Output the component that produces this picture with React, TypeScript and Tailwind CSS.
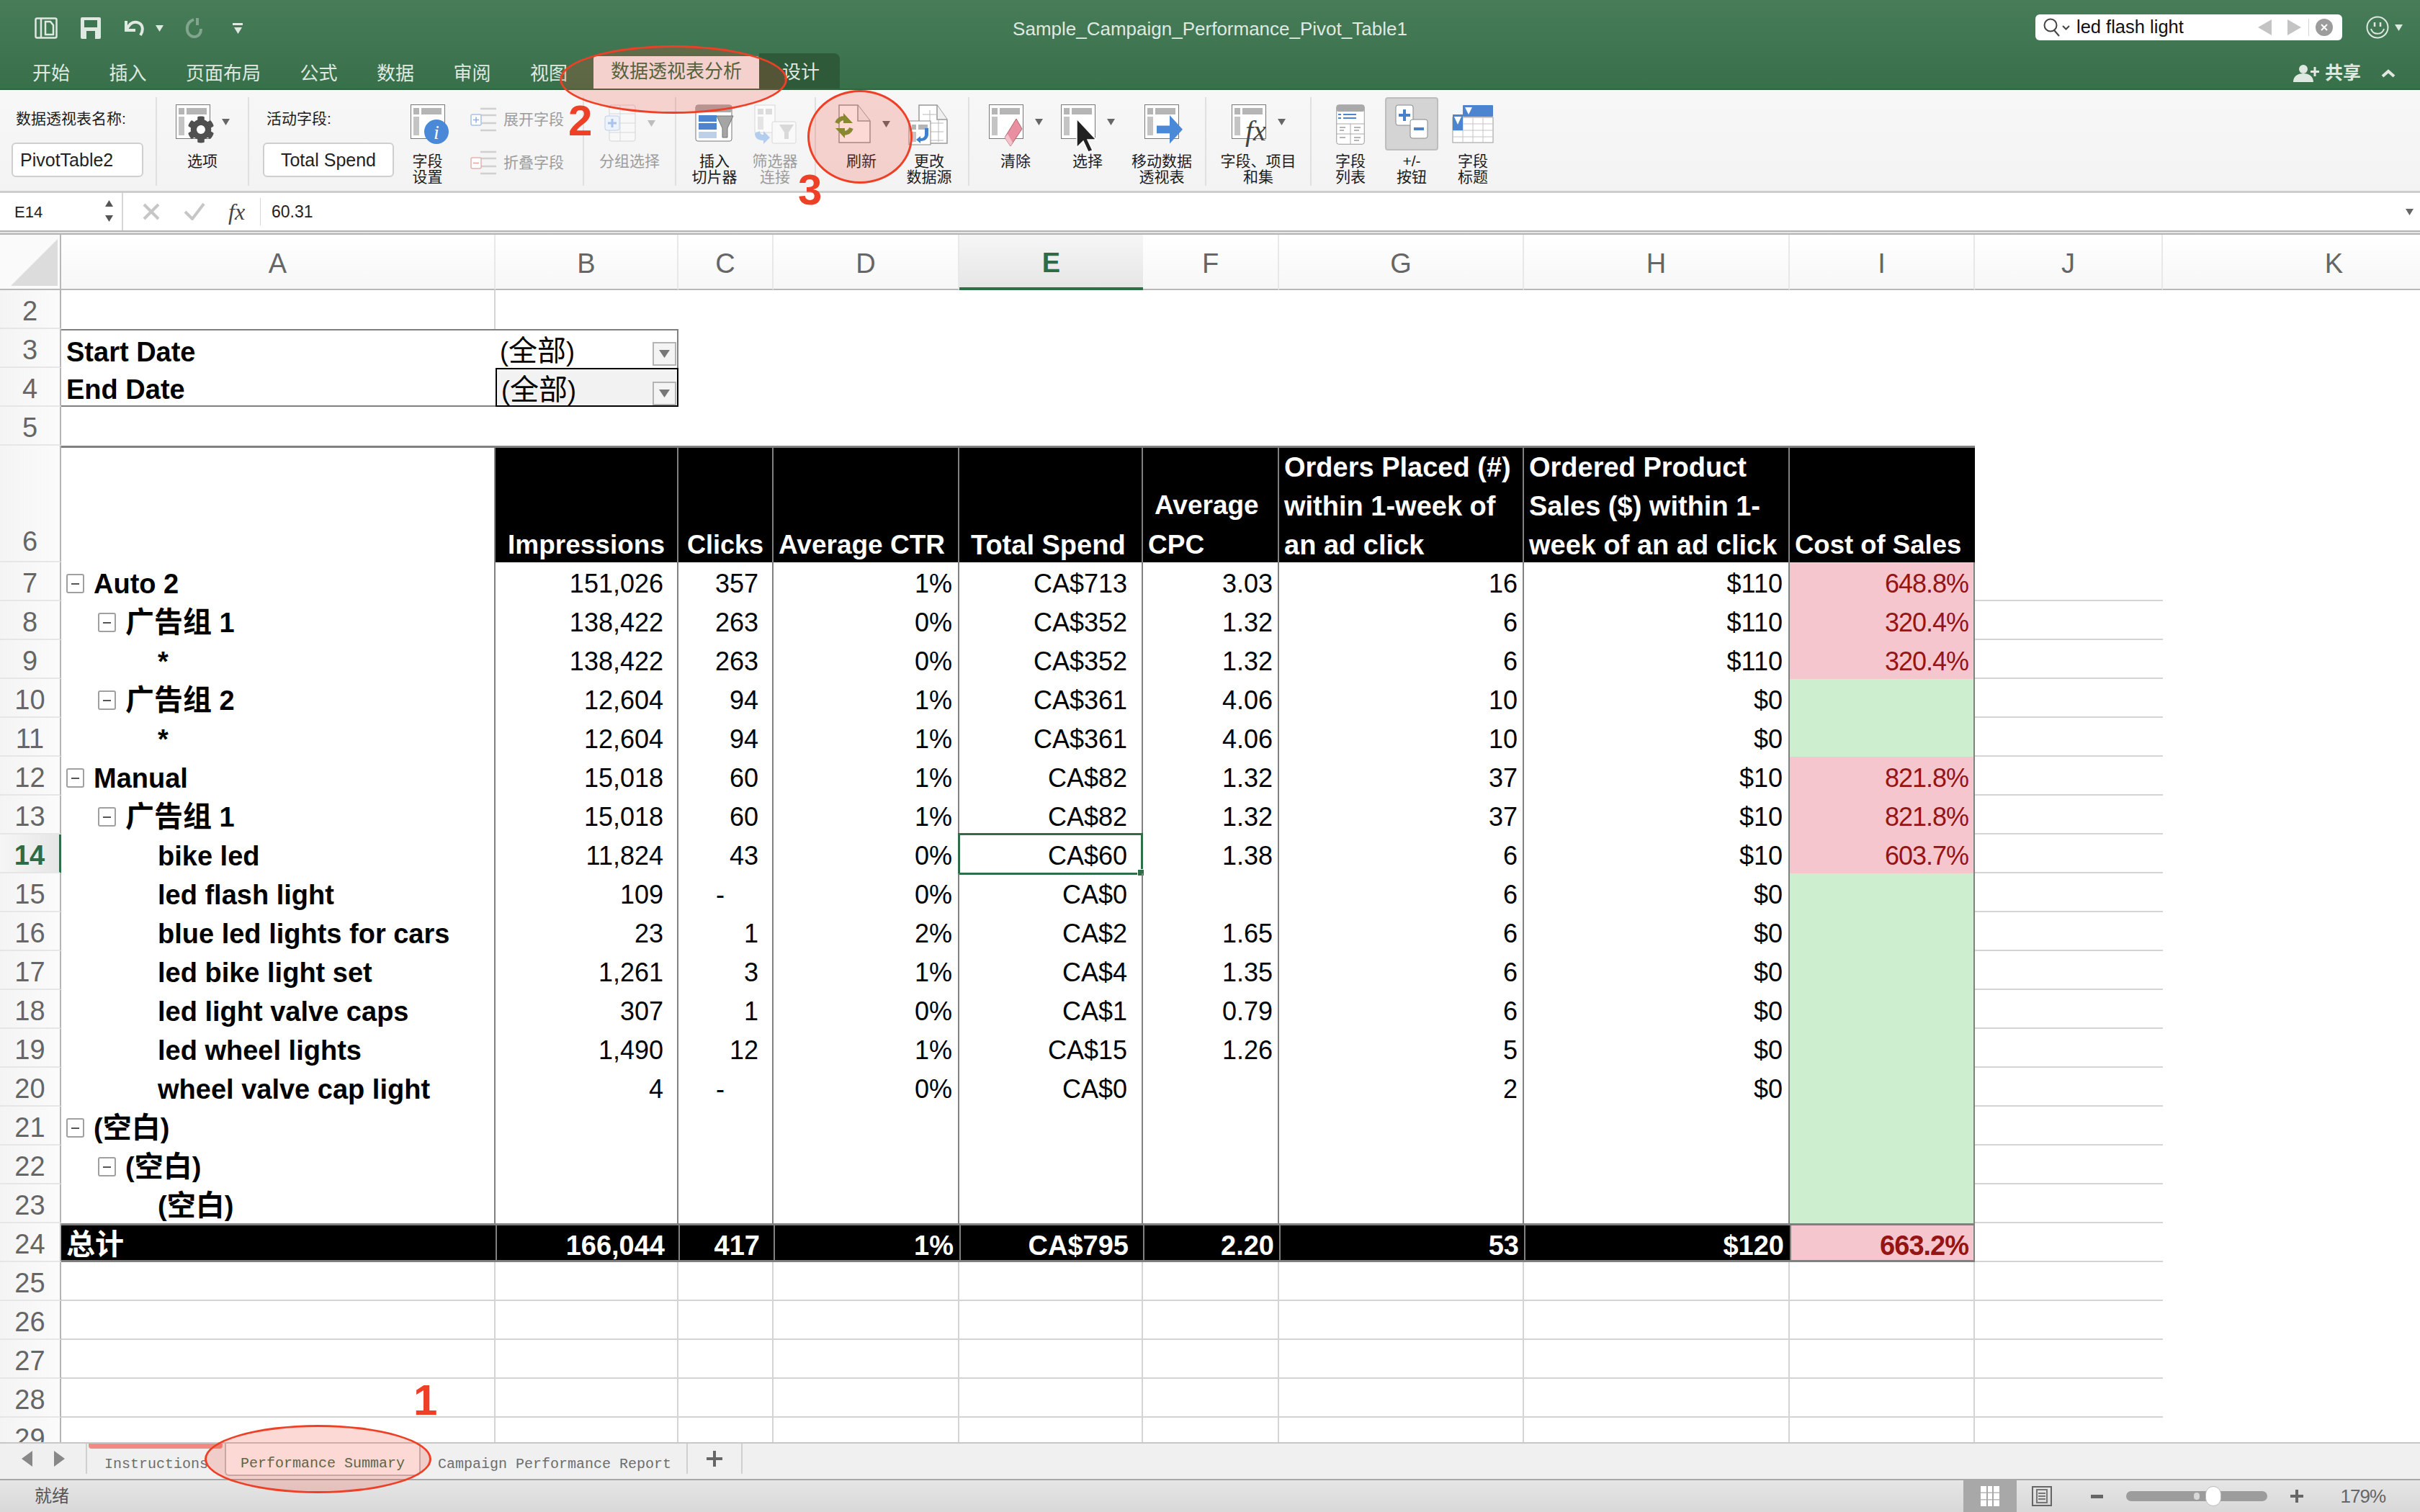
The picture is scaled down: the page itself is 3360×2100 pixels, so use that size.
import type { ReactNode } from "react";
import { FaCog } from "react-icons/fa";

const COLS = "grid-cols-[85px_603px_254px_132px_258px_255px_189px_340px_369px_257px_261px_357px]";
const PADS = ["pr-[19px]", "pr-[19px]", "pr-[8px]", "pr-[20px]", "pr-[7px]", "pr-[7px]", "pr-[8px]", "pr-[7px]"];

interface PivotRow {
  n: number;
  level: number;
  toggle?: boolean;
  label: ReactNode;
  vals: string[];
}

const Cjk = ({ children }: { children: ReactNode }) => <span className="text-[40px] leading-none">{children}</span>;

const rows: PivotRow[] = [
  { n: 7, level: 0, toggle: true, label: "Auto 2", vals: ["151,026", "357", "1%", "CA$713", "3.03", "16", "$110", "648.8%"] },
  { n: 8, level: 1, toggle: true, label: <><Cjk>广告组</Cjk> 1</>, vals: ["138,422", "263", "0%", "CA$352", "1.32", "6", "$110", "320.4%"] },
  { n: 9, level: 2, label: "*", vals: ["138,422", "263", "0%", "CA$352", "1.32", "6", "$110", "320.4%"] },
  { n: 10, level: 1, toggle: true, label: <><Cjk>广告组</Cjk> 2</>, vals: ["12,604", "94", "1%", "CA$361", "4.06", "10", "$0", ""] },
  { n: 11, level: 2, label: "*", vals: ["12,604", "94", "1%", "CA$361", "4.06", "10", "$0", ""] },
  { n: 12, level: 0, toggle: true, label: "Manual", vals: ["15,018", "60", "1%", "CA$82", "1.32", "37", "$10", "821.8%"] },
  { n: 13, level: 1, toggle: true, label: <><Cjk>广告组</Cjk> 1</>, vals: ["15,018", "60", "1%", "CA$82", "1.32", "37", "$10", "821.8%"] },
  { n: 14, level: 2, label: "bike led", vals: ["11,824", "43", "0%", "CA$60", "1.38", "6", "$10", "603.7%"] },
  { n: 15, level: 2, label: "led flash light", vals: ["109", "-", "0%", "CA$0", "", "6", "$0", ""] },
  { n: 16, level: 2, label: "blue led lights for cars", vals: ["23", "1", "2%", "CA$2", "1.65", "6", "$0", ""] },
  { n: 17, level: 2, label: "led bike light set", vals: ["1,261", "3", "1%", "CA$4", "1.35", "6", "$0", ""] },
  { n: 18, level: 2, label: "led light valve caps", vals: ["307", "1", "0%", "CA$1", "0.79", "6", "$0", ""] },
  { n: 19, level: 2, label: "led wheel lights", vals: ["1,490", "12", "1%", "CA$15", "1.26", "5", "$0", ""] },
  { n: 20, level: 2, label: "wheel valve cap light", vals: ["4", "-", "0%", "CA$0", "", "2", "$0", ""] },
  { n: 21, level: 0, toggle: true, label: <>(<Cjk>空白</Cjk>)</>, vals: ["", "", "", "", "", "", "", ""] },
  { n: 22, level: 1, toggle: true, label: <>(<Cjk>空白</Cjk>)</>, vals: ["", "", "", "", "", "", "", ""] },
  { n: 23, level: 2, label: <>(<Cjk>空白</Cjk>)</>, vals: ["", "", "", "", "", "", "", ""] },
];

const Tri = ({ className = "" }: { className?: string }) => (
  <svg width="11" height="9" viewBox="0 0 11 9" className={className}>
    <path d="M0 0h11L5.500 9z" fill="currentColor" />
  </svg>
);

function PivotBase({ children }: { children?: ReactNode }) {
  return (
    <svg width="48" height="48" viewBox="0 0 48 48" className="overflow-visible">
      <rect x="0.5" y="0.5" width="47" height="47" fill="#fff" stroke="#777" />
      <rect x="4" y="5" width="8" height="9" fill="#b5b5b5" />
      <rect x="15" y="5" width="28" height="9" fill="#b5b5b5" />
      <rect x="4" y="17" width="8" height="26" fill="#c4c4c4" />
      {children}
    </svg>
  );
}

const OptionsIcon = () => (
  <PivotBase>
    <FaCog x="16" y="16" size="38" color="#505050" />
  </PivotBase>
);

const FieldSettingsIcon = () => (
  <PivotBase>
    <ellipse cx="36" cy="38" rx="17" ry="17" fill="#4a88d8" />
    <text x="36" y="48" textAnchor="middle" fontSize="28" fontStyle="italic" fontFamily="Liberation Serif" fill="#fff">i</text>
  </PivotBase>
);

const TreeIcon = ({ minus }: { minus?: boolean }) => (
  <svg width="36" height="34" viewBox="0 0 36 34">
    <path d="M14 2h22M14 11h22M14 22h22M14 32h22" stroke="#d0d0d0" strokeWidth="2.5" />
    <rect x="1" y="10" width="14" height="15" rx="2" fill="#fff" stroke={minus ? "#e3b3ad" : "#a9c2e6"} strokeWidth="1.5" />
    <path d={minus ? "M4 17.5h8" : "M4 17.5h8M8 13.5v8"} stroke={minus ? "#e3a198" : "#8fb0e0"} strokeWidth="1.5" />
  </svg>
);

const GroupIcon = () => (
  <svg width="44" height="52" viewBox="0 0 44 52">
    <rect x="7" y="1" width="36" height="50" rx="3" fill="#f8f8f8" stroke="#d4d4d4" />
    <path d="M7 13h36M7 26h36M7 39h36M22 1v50" stroke="#d8d8d8" />
    <rect x="1" y="16" width="20" height="20" rx="3" fill="#eef3fb" stroke="#bcd0ec" />
    <path d="M5 26h12M11 20v12" stroke="#a8c4ec" strokeWidth="3" />
  </svg>
);

const SlicerIcon = () => (
  <svg width="54" height="52" viewBox="0 0 54 52">
    <rect x="1" y="1" width="50" height="50" rx="3" fill="#fff" stroke="#777" />
    <rect x="1" y="1" width="50" height="10" rx="2" fill="#a9a9a9" />
    <rect x="5" y="15" width="25" height="9" fill="#4d84cf" />
    <rect x="5" y="26" width="25" height="9" fill="#4d84cf" />
    <rect x="5" y="38" width="25" height="9" fill="#bcd0ea" />
    <path d="M30 16h23L45 33v13h-7V33z" fill="#a5a5a5" stroke="#777" />
  </svg>
);

const FilterConnIcon = () => (
  <svg width="60" height="56" viewBox="0 0 60 56">
    <rect x="2" y="1" width="28" height="38" fill="#fbfbfb" stroke="#d8d8d8" />
    <rect x="6" y="6" width="8" height="8" fill="#dcdcdc" />
    <rect x="17" y="6" width="9" height="8" fill="#dcdcdc" />
    <rect x="6" y="17" width="8" height="18" fill="#e4e4e4" />
    <rect x="26" y="24" width="33" height="30" rx="2" fill="#f9f9f9" stroke="#d8d8d8" />
    <path d="M36 28h20l-7 11v9h-6v-9z" fill="#d9d9d9" />
    <path d="M2 40c0 8 6 10 12 10v5l9-9-9-9v5c-3 0-5-1-5-5z" fill="#b3cdef" />
  </svg>
);

const RefreshIcon = () => (
  <svg width="52" height="54" viewBox="0 0 52 54">
    <path d="M8 1h26l17 22v30H8z" fill="#fff" stroke="#999" strokeWidth="1.5" />
    <path d="M34 1v22h17" fill="#f2f2f2" stroke="#999" strokeWidth="1.5" />
    <path d="M5 26c2-5 6-7 11-7" fill="none" stroke="#6f9a33" strokeWidth="6" />
    <path d="M14 13v14h13z" fill="#6f9a33" transform="translate(0 -1)" />
    <path d="M25 33c-2 5-6 7-11 7" fill="none" stroke="#6f9a33" strokeWidth="6" />
    <path d="M16 33v14L3 33z" fill="#6f9a33" />
  </svg>
);

const ChangeSourceIcon = () => (
  <svg width="58" height="58" viewBox="0 0 58 58">
    <path d="M15 1h25l14 20v33H15z" fill="#fff" stroke="#999" strokeWidth="1.5" />
    <path d="M40 1v20h14" fill="#f0f0f0" stroke="#999" strokeWidth="1.5" />
    <path d="M20 14h21M20 26h29M20 38h29M20 50h29M30 8v44M42 22v30" stroke="#b8b8b8" />
    <rect x="1" y="23" width="30" height="33" fill="#fff" stroke="#888" />
    <rect x="5" y="28" width="6" height="7" fill="#b5b5b5" />
    <rect x="14" y="28" width="13" height="7" fill="#b5b5b5" />
    <rect x="5" y="38" width="6" height="14" fill="#c4c4c4" />
    <path d="M23 37v8c0 4-2 6-6 6v-3l-6 5 6 5v-3c7 0 11-4 11-10v-8z" fill="#3f7fce" transform="translate(0 -4)" />
  </svg>
);

const ClearIcon = () => (
  <PivotBase>
    <path d="M38 20l8 14-16 24-8-12z" fill="#e98fa1" stroke="#a66" />
    <path d="M22 46l8 12 3-5-7-12z" fill="#f4c2cc" />
  </PivotBase>
);

const SelectIcon = () => (
  <PivotBase>
    <path d="M22 20v40l9-9 7 15 6-2-7-15h12z" fill="#222" stroke="#fff" strokeWidth="1.5" />
  </PivotBase>
);

const MoveIcon = () => (
  <PivotBase>
    <path d="M17 36h18V20l18 22-18 22V48H17z" transform="translate(0 -3) scale(1 0.9)" fill="#4a88d8" />
  </PivotBase>
);

const FormulaIcon = () => (
  <PivotBase>
    <text x="19" y="50" fontSize="40" fontStyle="italic" fontFamily="Liberation Serif" fill="#444">fx</text>
  </PivotBase>
);

const FieldListIcon = () => (
  <svg width="40" height="56" viewBox="0 0 40 56">
    <rect x="0.75" y="0.75" width="38.5" height="54.5" rx="3" fill="#fff" stroke="#999" />
    <rect x="1" y="1" width="38" height="9" rx="2" fill="#a9a9a9" />
    <path d="M1 27h38M20 27v28M1 41h38" stroke="#aaa" />
    <path d="M10 14h18M10 19h18" stroke="#4d84cf" strokeWidth="2" />
    <path d="M3 14h4M3 19h4" stroke="#4d84cf" strokeWidth="2" />
    <path d="M5 32h8M5 36h6M25 32h9M25 36h7M5 46h8M25 46h9M25 50h7" stroke="#b5b5b5" strokeWidth="2" />
  </svg>
);

const PlusMinusIcon = () => (
  <svg width="46" height="48" viewBox="0 0 46 48">
    <rect x="1" y="1" width="24" height="28" rx="3" fill="#fff" stroke="#888" />
    <path d="M5 15h16M13 7v16" stroke="#4a80c8" strokeWidth="4" />
    <rect x="21" y="21" width="24" height="26" rx="3" fill="#fff" stroke="#888" />
    <path d="M26 34h14" stroke="#4a80c8" strokeWidth="4" />
  </svg>
);

const FieldHeaderIcon = () => (
  <svg width="58" height="54" viewBox="0 0 58 54">
    <rect x="1" y="18" width="56" height="35" fill="#fff" stroke="#999" />
    <path d="M1 27h56M1 36h56M1 45h56M15 18v35M29 18v35M43 18v35" stroke="#c4c4c4" />
    <rect x="15" y="1" width="42" height="16" rx="1" fill="#4d84cf" />
    <rect x="1" y="14" width="14" height="22" fill="#4d84cf" />
    <path d="M18 4h10l-5 10zM3 17h10l-5 11z" fill="#fff" />
  </svg>
);

function RibbonBtn({
  w,
  icon,
  lines,
  arrow,
  muted,
  active,
}: {
  w: string;
  icon: ReactNode;
  lines: string[];
  arrow?: boolean;
  muted?: boolean;
  active?: boolean;
}) {
  return (
    <div className={`flex flex-col items-center shrink-0 ${w}`}>
      <div className={`flex flex-col items-center w-full rounded-sm ${active ? "h-[74px] bg-[#d4d4d4] border-2 border-[#bdbdbd]" : "h-[78px]"}`}>
        <div className={`flex items-center gap-[16px] ${active ? "mt-[8px]" : "mt-[10px]"}`}>
          {icon}
          {arrow && <Tri className={muted ? "text-[#bdbdbd]" : "text-[#666]"} />}
        </div>
      </div>
      <div className={`text-[21px] leading-[22px] text-center whitespace-nowrap ${active ? "mt-[4px]" : ""} ${muted ? "text-[#9c9c9c]" : "text-[#1c1c1c]"}`}>
        {lines.map((l) => (
          <div key={l}>{l}</div>
        ))}
      </div>
    </div>
  );
}

const Group = ({ className, children }: { className: string; children: ReactNode }) => (
  <div className={`flex h-[123px] shrink-0 border-r-2 border-[#e0e0e0] ${className}`}>{children}</div>
);

function Ribbon() {
  return (
    <div className="flex h-[143px] pt-[10px] bg-gradient-to-b from-[#f7f7f7] to-[#f3f3f3] border-b-[3px] border-[#cdcdcd]">
      <Group className="w-[218px] flex-col pl-[16px]">
        <div className="text-[21px] leading-[24px] mt-[18px] ml-[6px] text-[#1c1c1c]">数据透视表名称:</div>
        <div className="w-[183px] h-[48px] mt-[21px] bg-white border-2 border-[#cfcfcf] rounded-md pl-[10px] text-[25px] leading-[44px] text-[#222]">PivotTable2</div>
      </Group>
      <Group className="w-[128px]">
        <RibbonBtn w="w-[126px]" icon={<OptionsIcon />} lines={["选项"]} arrow />
      </Group>
      <Group className="w-[465px] pl-[19px]">
        <div className="flex flex-col w-[182px]">
          <div className="text-[21px] leading-[24px] mt-[18px] ml-[5px] text-[#1c1c1c]">活动字段:</div>
          <div className="w-[182px] h-[48px] mt-[21px] bg-white border-2 border-[#cfcfcf] rounded-md text-center text-[25px] leading-[44px] text-[#222]">Total Spend</div>
        </div>
        <RibbonBtn w="w-[93px]" icon={<FieldSettingsIcon />} lines={["字段", "设置"]} />
        <div className="flex flex-col gap-[26px] mt-[14px] ml-[13px] text-[21px] leading-[34px] text-[#9c9c9c]">
          <div className="flex items-center gap-[10px]"><TreeIcon />展开字段</div>
          <div className="flex items-center gap-[10px]"><TreeIcon minus />折叠字段</div>
        </div>
      </Group>
      <Group className="w-[128px]">
        <RibbonBtn w="w-[126px]" icon={<GroupIcon />} lines={["分组选择"]} arrow muted />
      </Group>
      <Group className="w-[194px] pl-[8px]">
        <RibbonBtn w="w-[90px]" icon={<SlicerIcon />} lines={["插入", "切片器"]} />
        <RibbonBtn w="w-[78px]" icon={<FilterConnIcon />} lines={["筛选器", "连接"]} muted />
      </Group>
      <Group className="w-[213px] pl-[17px]">
        <RibbonBtn w="w-[92px]" icon={<RefreshIcon />} lines={["刷新"]} arrow />
        <RibbonBtn w="w-[96px]" icon={<ChangeSourceIcon />} lines={["更改", "数据源"]} />
      </Group>
      <Group className="w-[329px] pl-[19px]">
        <RibbonBtn w="w-[90px]" icon={<ClearIcon />} lines={["清除"]} arrow />
        <RibbonBtn w="w-[110px]" icon={<SelectIcon />} lines={["选择"]} arrow />
        <RibbonBtn w="w-[96px]" icon={<MoveIcon />} lines={["移动数据", "透视表"]} />
      </Group>
      <Group className="w-[146px]">
        <RibbonBtn w="w-[144px]" icon={<FormulaIcon />} lines={["字段、项目", "和集"]} arrow />
      </Group>
      <div className="flex pl-[8px] gap-[2px]">
        <RibbonBtn w="w-[92px]" icon={<FieldListIcon />} lines={["字段", "列表"]} />
        <RibbonBtn w="w-[74px]" icon={<PlusMinusIcon />} lines={["+/-", "按钮"]} active />
        <RibbonBtn w="w-[92px]" icon={<FieldHeaderIcon />} lines={["字段", "标题"]} />
      </div>
    </div>
  );
}

function TitleBar() {
  const tabs = ["开始", "插入", "页面布局", "公式", "数据", "审阅", "视图"];
  return (
    <div className="h-[125px] bg-gradient-to-b from-[#487c59] to-[#38704a] border-b-2 border-[#33633f] text-[#dfe9e2]">
      <div className="grid grid-cols-[1fr_auto_1fr] items-center h-[76px]">
        <div className="flex items-center pl-[48px] pt-[2px]">
          <svg width="32" height="30" viewBox="0 0 32 30" fill="none" stroke="currentColor" strokeWidth="2.5">
            <rect x="1.5" y="1.5" width="29" height="27" rx="2" />
            <path d="M9 2v26M15 6h7l4 5v13H15z" />
          </svg>
          <svg width="28" height="30" viewBox="0 0 28 30" className="ml-[32px]">
            <path d="M2 0h24a2 2 0 012 2v26a2 2 0 01-2 2H2a2 2 0 01-2-2V2a2 2 0 012-2z" fill="currentColor" />
            <rect x="5" y="4" width="18" height="10" fill="#3f7552" />
            <rect x="8" y="19" width="12" height="11" fill="#3f7552" />
          </svg>
          <svg width="30" height="26" viewBox="0 0 30 26" className="ml-[32px]" fill="none" stroke="currentColor" strokeWidth="4">
            <path d="M3 3v13h13M4 15c4-9 10-12 17-9 6 3 6 11 2 17" />
          </svg>
          <Tri className="ml-[14px] text-[#dfe9e2]" />
          <svg width="24" height="34" viewBox="0 0 24 34" className="ml-[30px] opacity-40" fill="none" stroke="currentColor" strokeWidth="4">
            <path d="M17 3v10M12 5C5 8 2 13 3 20c1 7 8 11 14 8 4-2 5-6 5-10" />
          </svg>
          <div className="ml-[42px] flex flex-col items-center gap-[3px]">
            <div className="w-[14px] h-[3px] bg-current" />
            <Tri className="text-[#dfe9e2]" />
          </div>
        </div>
        <div className="text-[26px] leading-none pt-[3px]">Sample_Campaign_Performance_Pivot_Table1</div>
        <div className="flex items-center justify-end pr-[24px]">
          <div className="flex items-center w-[426px] h-[36px] bg-white rounded-md pl-[11px] text-[#111]">
            <svg width="24" height="26" viewBox="0 0 24 26" fill="none" stroke="#444" strokeWidth="2">
              <circle cx="10" cy="10" r="8.5" />
              <path d="M15 17l7 8" />
            </svg>
            <svg width="11" height="7" viewBox="0 0 11 7" className="ml-[2px]" fill="none" stroke="#444" strokeWidth="2"><path d="M1 1l4.500 4.500L10 1" /></svg>
            <span className="ml-[9px] text-[25.5px] leading-none">led flash light</span>
            <svg width="19" height="22" viewBox="0 0 19 22" className="ml-auto"><path d="M19 0v22L0 11z" fill="#c4c4c4" /></svg>
            <svg width="19" height="22" viewBox="0 0 19 22" className="ml-[22px]"><path d="M0 0v22l19-11z" fill="#c4c4c4" /></svg>
            <div className="ml-[10px] w-px h-[24px] bg-[#d4d4d4]" />
            <svg width="24" height="24" viewBox="0 0 24 24" className="ml-[9px] mr-[13px]">
              <circle cx="12" cy="12" r="12" fill="#9c9c9c" />
              <path d="M8 8l8 8M16 8l-8 8" stroke="#fff" strokeWidth="2" />
            </svg>
          </div>
          <svg width="32" height="32" viewBox="0 0 32 32" className="ml-[33px]" fill="none" stroke="currentColor" strokeWidth="2">
            <circle cx="16" cy="16" r="14.500" />
            <path d="M12 9v6M20 9v6" strokeWidth="2.500" />
            <path d="M7 18c2 9 16 9 18 0" />
          </svg>
          <Tri className="ml-[8px] text-[#dfe9e2]" />
        </div>
      </div>
      <div className="flex h-[47px] items-end">
        <div className="flex items-center h-[43px] pl-[45px] gap-[54.5px] text-[26px] leading-none w-[824px]">
          {tabs.map((t) => (
            <span key={t}>{t}</span>
          ))}
        </div>
        <div className="h-[45px] w-[230px] bg-[#f5f5f5] text-[#2f6b45] text-[26px] leading-[43px] text-center rounded-t-sm">数据透视表分析</div>
        <div className="h-[49px] w-[112px] bg-[#2e5a3a] rounded-tr-lg text-[26px] leading-[53px] pl-[32px]">设计</div>
        <div className="ml-auto flex items-center h-[43px] pr-[34px]">
          <svg width="36" height="24" viewBox="0 0 36 24" fill="currentColor">
            <circle cx="14" cy="6" r="6" />
            <path d="M0 24c0-8 6-12 14-12s14 4 14 12zM24 8h12v3H24zM28.500 3h3v13h-3z" />
          </svg>
          <span className="ml-[8px] text-[25px] leading-none font-bold">共享</span>
          <svg width="20" height="12" viewBox="0 0 20 12" className="ml-[28px]" fill="none" stroke="currentColor" strokeWidth="4"><path d="M2 10l8-7 8 7" /></svg>
        </div>
      </div>
    </div>
  );
}

function FormulaBar() {
  return (
    <>
      <div className="flex items-center h-[52px] bg-white">
        <div className="relative flex items-center w-[171px] h-full pl-[20px] text-[22px] text-[#222] border-r-2 border-[#d6d6d6]">
          E14
          <div className="absolute right-[12px] top-[10px] flex flex-col gap-[12px] text-[#555]">
            <Tri className="rotate-180" />
            <Tri />
          </div>
        </div>
        <svg width="24" height="24" viewBox="0 0 24 24" className="ml-[27px]" stroke="#c6c6c6" strokeWidth="4"><path d="M2 2l20 20M22 2L2 22" /></svg>
        <svg width="30" height="24" viewBox="0 0 30 24" className="ml-[33px]" fill="none" stroke="#c6c6c6" strokeWidth="4"><path d="M2 12l10 10L28 1" /></svg>
        <span className="ml-[32px] w-[44px] text-[32px] leading-none italic text-[#444] font-['Liberation_Serif',serif]">fx</span>
        <div className="w-px h-[38px] bg-[#d6d6d6]" />
        <span className="ml-[15px] text-[23px] text-[#222]">60.31</span>
        <Tri className="ml-auto mr-[9px] text-[#666]" />
      </div>
      <div className="h-[6px] bg-[#e6e6e6] border-y-2 border-[#b4b4b4]" />
    </>
  );
}

function ColHeaders() {
  const letters = ["A", "B", "C", "D", "E", "F", "G", "H", "I", "J"];
  return (
    <div className={`grid h-[77px] grid-rows-[77px] ${COLS}`}>
      <div className="flex items-end justify-end pr-[3px] pb-[4px] bg-[#fafafa] border-r-2 border-b-2 border-[#b8b8b8]">
        <svg width="65" height="65" viewBox="0 0 65 65"><path d="M65 0v65H0z" fill="#dcdcdc" /></svg>
      </div>
      {letters.map((l) =>
        l === "E" ? (
          <div key={l} className="text-center text-[38px] font-bold leading-[78px] text-[#2f6b45] bg-gradient-to-b from-[#f6f6f6] to-[#e6e6e6] border-b-4 border-[#2f6f47]">{l}</div>
        ) : (
          <div key={l} className="text-center text-[38px] leading-[80px] text-[#666] bg-gradient-to-b from-white to-[#f7f7f7] border-r-2 border-b-2 border-r-[#e8e8e8] border-b-[#b8b8b8]">{l}</div>
        )
      )}
      <div className="pl-[118px] text-center text-[38px] leading-[80px] text-[#666] bg-gradient-to-b from-white to-[#f7f7f7] border-b-2 border-[#b8b8b8]">K</div>
    </div>
  );
}

function RowNum({ n, tall }: { n: number; tall?: boolean }) {
  const on = n === 14;
  return (
    <div
      className={`text-center text-[38px] border-b-2 border-b-[#e6e6e6] ${tall ? "flex items-end justify-center leading-[54px]" : "leading-[59px]"} ${
        on
          ? "font-bold text-[#2f6b45] bg-gradient-to-r from-[#f6f6f6] to-[#e6e6e6] border-r-[3px] border-r-[#2f6f47]"
          : "text-[#666] bg-gradient-to-r from-[#f4f4f4] to-[#fbfbfb] border-r-2 border-r-[#b4b4b4]"
      }`}
    >
      {n}
    </div>
  );
}

const Toggle = () => (
  <div className="flex items-center justify-center shrink-0 w-[25px] h-[27px] mt-[16px] border-2 border-[#a0a0a0] rounded-[3px] bg-white">
    <div className="w-[11px] h-[2px] bg-[#555]" />
  </div>
);

const Filter = ({ top }: { top: string }) => (
  <div className={`absolute right-[1px] flex items-center justify-center w-[33px] h-[33px] bg-[#f4f4f4] border-2 border-[#b4b4b4] ${top}`}>
    <svg width="15" height="11" viewBox="0 0 15 11"><path d="M0 0h15L7.500 11z" fill="#777" /></svg>
  </div>
);

const Line = ({ children }: { children: ReactNode }) => <div className="whitespace-nowrap">{children}</div>;

function HeaderCell({ lines, last }: { lines: ReactNode[]; last?: boolean }) {
  return (
    <div className={`flex flex-col justify-end bg-black text-white font-bold text-[38px] pl-[7px] leading-[54px] border-t-[3px] border-[#808080] overflow-hidden ${last ? "" : "border-r-2"}`}>
      <div className="-mb-[3px]">
        {lines.map((l, i) => (
          <Line key={i}>{l}</Line>
        ))}
      </div>
    </div>
  );
}

function PivotTable() {
  return (
    <div className="flex-1 overflow-hidden bg-white text-[36px] text-black">
      {/* row 2 */}
      <div className={`grid h-[54px] grid-rows-[54px] ${COLS}`}>
        <RowNum n={2} />
        <div className="border-r-2 border-[#d4d4d4]" />
      </div>
      {/* report filters */}
      <div className={`grid h-[54px] grid-rows-[54px] ${COLS}`}>
        <RowNum n={3} />
        <div className="pl-[7px] font-bold text-[38px] leading-[60px] border-t-2 border-[#808080]">Start Date</div>
        <div className="relative pl-[6px] leading-[60px] border-t-2 border-r-2 border-[#808080]">
          (<Cjk>全部</Cjk>)
          <Filter top="top-[16px]" />
        </div>
      </div>
      <div className={`grid h-[54px] grid-rows-[54px] ${COLS}`}>
        <RowNum n={4} />
        <div className="pl-[7px] font-bold text-[38px] leading-[60px] border-b-2 border-[#808080]">End Date</div>
        <div className="relative pl-[6px] leading-[60px] bg-[#f2f2f2] border-2 border-black">
          (<Cjk>全部</Cjk>)
          <Filter top="top-[17px]" />
        </div>
      </div>
      <div className={`grid h-[54px] grid-rows-[54px] ${COLS}`}>
        <RowNum n={5} />
      </div>
      {/* header row */}
      <div className={`grid h-[162px] grid-rows-[162px] ${COLS}`}>
        <RowNum n={6} tall />
        <div className="border-t-[3px] border-r-2 border-[#808080]" />
        <HeaderCell lines={[<span className="pl-[10px] text-[37px]">Impressions</span>]} />
        <HeaderCell lines={[<span className="pl-[5px] text-[36px]">Clicks</span>]} />
        <HeaderCell lines={[<span className="text-[37px]">Average CTR</span>]} />
        <HeaderCell lines={[<span className="pl-[9px]">Total Spend</span>]} />
        <HeaderCell lines={[<span className="pl-[9px] text-[37px]">Average</span>, <span className="text-[37px]">CPC</span>]} />
        <HeaderCell lines={["Orders Placed (#)", "within 1-week of", "an ad click"]} />
        <HeaderCell lines={["Ordered Product", "Sales ($) within 1-", "week of an ad click"]} />
        <HeaderCell lines={[<span className="text-[36.5px]">Cost of Sales</span>]} last />
      </div>
      {/* body */}
      {rows.map((r) => (
        <div key={r.n} className={`grid h-[54px] grid-rows-[54px] ${COLS}`}>
          <RowNum n={r.n} />
          <div className={`flex items-start font-bold text-[38px] leading-[60px] border-r-2 border-[#808080] ${r.level === 0 ? "pl-[7px]" : r.level === 1 ? "pl-[51px]" : "pl-[134px]"}`}>
            {r.toggle && <Toggle />}
            <span className={`whitespace-nowrap ${r.toggle ? "ml-[13px]" : ""}`}>{r.label}</span>
          </div>
          {r.vals.slice(0, 7).map((v, i) => (
            <div key={i} className={`relative text-right leading-[60px] border-r-2 border-[#808080] ${v === "-" ? "pr-[66px]" : PADS[i]}`}>
              {v}
              {r.n === 14 && i === 3 && (
                <div className="absolute -left-[2px] -top-[2px] -right-[2px] -bottom-[2px] border-[3px] border-[#2f6f47]">
                  <div className="absolute -right-[5px] -bottom-[5px] w-[10px] h-[10px] bg-[#2f6f47] border border-white" />
                </div>
              )}
            </div>
          ))}
          <div className={`text-right leading-[60px] tracking-[-1px] pr-[7px] text-[#951414] border-r-2 border-[#808080] ${r.vals[7] ? "bg-[#f6c6ce]" : "bg-[#ceeed0]"}`}>{r.vals[7]}</div>
          <div className="border-b-2 border-[#d4d4d4]" />
        </div>
      ))}
      {/* grand total */}
      <div className={`grid h-[54px] grid-rows-[54px] ${COLS}`}>
        <RowNum n={24} />
        <div className="pl-[7px] bg-black text-white font-bold leading-[56px] border-y-[3px] border-[#808080]">
          <Cjk>总计</Cjk>
        </div>
        {["166,044", "417", "1%", "CA$795", "2.20", "53", "$120"].map((v, i) => (
          <div key={v} className={`text-right bg-black text-white font-bold text-[38px] leading-[56px] border-y-[3px] border-l-2 border-[#808080] ${PADS[i]}`}>{v}</div>
        ))}
        <div className="text-right leading-[56px] font-bold text-[38px] tracking-[-1px] pr-[7px] bg-[#f6c6ce] text-[#951414] border-y-[3px] border-l-2 border-r-2 border-[#808080]">663.2%</div>
        <div className="border-b-2 border-[#d4d4d4]" />
      </div>
      {/* empty rows */}
      {[25, 26, 27, 28, 29].map((n) => (
        <div key={n} className={`grid h-[54px] grid-rows-[54px] ${COLS}`}>
          <RowNum n={n} />
          {[1, 2, 3, 4, 5, 6, 7, 8, 9].map((c) => (
            <div key={c} className="border-r-2 border-b-2 border-[#d4d4d4]" />
          ))}
          <div className="border-b-2 border-[#d4d4d4]" />
        </div>
      ))}
    </div>
  );
}

function SheetTabs() {
  return (
    <div className="flex h-[51px] bg-[#f0f0f0] border-t-2 border-[#c8c8c8] font-['Liberation_Mono',monospace] text-[20px] leading-[58px] text-[#6e6e6e]">
      <div className="flex items-center gap-[30px] w-[121px] h-[42px] pl-[30px] border-r-2 border-[#d0d0d0]">
        <svg width="15" height="22" viewBox="0 0 15 22"><path d="M15 0v22L0 11z" fill="#888" /></svg>
        <svg width="15" height="22" viewBox="0 0 15 22"><path d="M0 0v22l15-11z" fill="#888" /></svg>
      </div>
      <div className="w-[191px] pl-[24px] relative whitespace-nowrap">
        <div className="absolute left-[2px] right-[3px] top-0 h-[7px] bg-[#ee8c84] rounded-b-sm" />
        Instructions
      </div>
      <div className="w-[272px] h-[45px] pl-[20px] bg-white text-[#3d7050] rounded-b-md border-x-2 border-b-2 border-[#c0c0c0] leading-[56px] whitespace-nowrap">Performance Summary</div>
      <div className="w-[371px] h-[42px] pl-[24px] border-r-2 border-[#d0d0d0] whitespace-nowrap">Campaign Performance Report</div>
      <div className="flex items-center justify-center w-[76px] h-[42px] border-r-2 border-[#d0d0d0]">
        <svg width="22" height="22" viewBox="0 0 22 22"><path d="M9 0h4v9h9v4h-9v9H9v-9H0V9h9z" fill="#666" /></svg>
      </div>
    </div>
  );
}

function StatusBar() {
  return (
    <div className="flex items-center h-[46px] border-t-2 border-[#a8a8a8] bg-gradient-to-b from-[#e6e6e6] to-[#d8d8d8] text-[#555]">
      <span className="ml-[48px] text-[24px] leading-none">就绪</span>
      <div className="ml-auto flex items-center justify-center w-[74px] h-full bg-[#a8a8a8]">
        <svg width="26" height="28" viewBox="0 0 26 40" preserveAspectRatio="none">
          <rect width="26" height="40" fill="#fff" />
          <path d="M9 0v40M17 0v40M0 13h26M0 27h26" stroke="#a8a8a8" strokeWidth="2" />
        </svg>
      </div>
      <svg width="28" height="28" viewBox="0 0 28 28" className="ml-[21px]" fill="none">
        <rect x="1" y="1" width="26" height="26" stroke="#666" strokeWidth="2" />
        <rect x="7" y="5" width="14" height="18" stroke="#777" strokeWidth="2" />
        <path d="M9 10h10M9 14h10M9 18h10" stroke="#777" strokeWidth="2" />
      </svg>
      <div className="ml-[54px] w-[17px] h-[5px] bg-[#666]" />
      <div className="relative ml-[32px] w-[196px] h-[14px] rounded-full bg-[#9c9c9c]">
        <div className="absolute left-[94px] top-[2px] w-[8px] h-[10px] rounded-full bg-[#d8d8d8]" />
        <div className="absolute left-[110px] -top-[7px] w-[22px] h-[28px] rounded-full bg-white border border-[#bbb]" />
      </div>
      <svg width="18" height="18" viewBox="0 0 18 18" className="ml-[32px]"><path d="M7 0h4v7h7v4h-7v7H7v-7H0V7h7z" fill="#666" /></svg>
      <span className="ml-[52px] mr-[48px] text-[26px] leading-none text-[#666] tracking-[-1px]">179%</span>
    </div>
  );
}

const Mark = ({ className }: { className: string }) => (
  <div className={`absolute rounded-[50%] bg-[#ee4026]/20 border-[3px] border-[#ee4026] ${className}`} />
);

const Num = ({ className, children }: { className: string; children: ReactNode }) => (
  <div className={`absolute text-[60px] font-bold leading-none text-[#ee4026] ${className}`}>{children}</div>
);

export default function App() {
  return (
    <div className="relative flex flex-col w-[3360px] h-[2100px] overflow-hidden bg-white font-['Liberation_Sans','Noto_Sans_CJK_SC',sans-serif]">
      <TitleBar />
      <Ribbon />
      <FormulaBar />
      <ColHeaders />
      <PivotTable />
      <SheetTabs />
      <StatusBar />

      {/* annotations on top of the screenshot */}
      <Mark className="left-[777px] top-[63px] w-[316px] h-[95px]" />
      <Mark className="left-[1121px] top-[125px] w-[146px] h-[130px]" />
      <Mark className="left-[284px] top-[1979px] w-[315px] h-[95px]" />
      <Num className="left-[789px] top-[138px]">2</Num>
      <Num className="left-[1108px] top-[234px]">3</Num>
      <Num className="left-[574px] top-[1915px]">1</Num>
    </div>
  );
}
